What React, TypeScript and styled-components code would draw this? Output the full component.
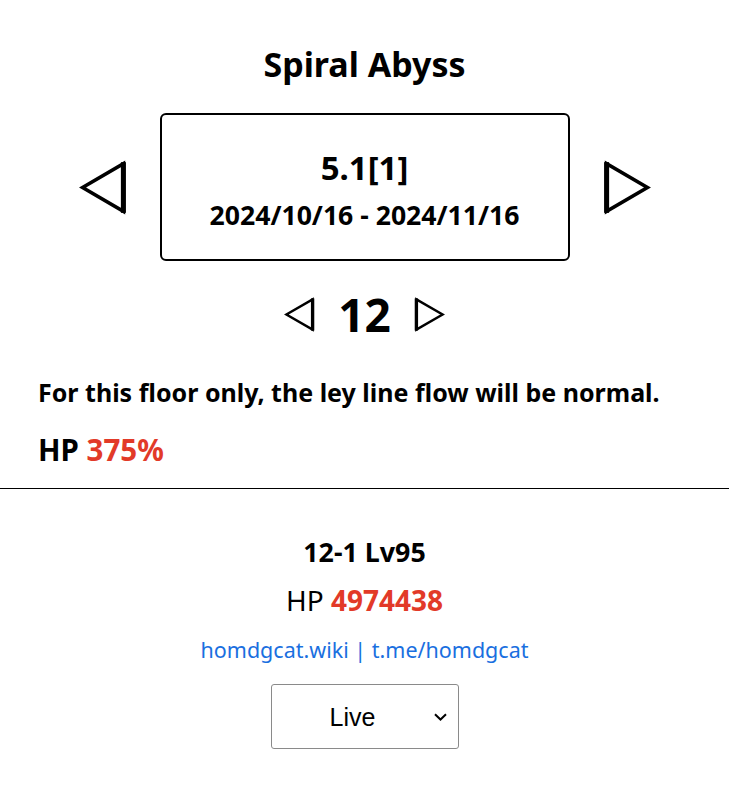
import React from "react"
import styled, { createGlobalStyle } from "styled-components"

const GlobalStyle = createGlobalStyle`
  body {
    margin: 0;
    background: #fff;
    color: #000;
    font-family: "Noto Sans", "Open Sans", sans-serif;
  }
`

// outline triangle, the flat edge drawn a bit heavier like the glyph in the design
const Arrow = ({ dir, size, stroke }: { dir: "left" | "right"; size: number; stroke: number }) => {
  const h = size
  const w = Math.round(size * 0.88)
  const s = stroke
  const flatX = dir === "left" ? w - s : s
  const tipX = dir === "left" ? s : w - s
  return (
    <svg width={w} height={h} viewBox={`0 0 ${w} ${h}`}>
      <polygon
        points={`${flatX},${s} ${flatX},${h - s} ${tipX},${h / 2}`}
        fill="none"
        stroke="#000"
        strokeWidth={s}
        strokeLinejoin="miter"
      />
      <line x1={flatX} y1={s * 0.6} x2={flatX} y2={h - s * 0.6} stroke="#000" strokeWidth={s * 1.4} />
    </svg>
  )
}

const Chevron = () => (
  <svg width="13" height="8" viewBox="0 0 13 8">
    <path d="M1 1.2 L6.5 6.5 L12 1.2" fill="none" stroke="#000" strokeWidth="2" />
  </svg>
)

const App = () => {
  return (
    <>
      <GlobalStyle />
      <Page>
        <Top>
          <Title>Spiral Abyss</Title>
          <VersionRow>
            <NavButton>
              <Arrow dir="left" size={55} stroke={3.6} />
            </NavButton>
            <VersionBox>
              <Version>5.1[1]</Version>
              <Dates>2024/10/16 - 2024/11/16</Dates>
            </VersionBox>
            <NavButton>
              <Arrow dir="right" size={55} stroke={3.6} />
            </NavButton>
          </VersionRow>
          <FloorRow>
            <NavButton>
              <Arrow dir="left" size={35} stroke={2.4} />
            </NavButton>
            <Floor>12</Floor>
            <NavButton>
              <Arrow dir="right" size={35} stroke={2.4} />
            </NavButton>
          </FloorRow>
          <Note>For this floor only, the ley line flow will be normal.</Note>
          <FloorHp>
            HP <Red>375%</Red>
          </FloorHp>
        </Top>
        <Divider />
        <Bottom>
          <Chamber>12-1 Lv95</Chamber>
          <ChamberHp>
            HP <Red>4974438</Red>
          </ChamberHp>
          <Links>
            <a href="#">homdgcat.wiki</a> | <a href="#">t.me/homdgcat</a>
          </Links>
          <SelectWrap>
            <Select defaultValue="Live">
              <option value="Live">Live</option>
              <option value="Beta">Beta</option>
            </Select>
            <SelectIcon>
              <Chevron />
            </SelectIcon>
          </SelectWrap>
        </Bottom>
      </Page>
    </>
  )
}

const Page = styled.div`
  width: 729px;
`

const Top = styled.section`
  display: flex;
  flex-direction: column;
  align-items: center;
  padding-top: 41px;
  padding-bottom: 21px;
`

const Title = styled.h1`
  margin: 0;
  font-size: 34px;
  font-weight: 700;
  line-height: 46px;
`

const VersionRow = styled.div`
  display: flex;
  align-items: center;
  gap: 33px;
  margin-top: 26px;
`

const NavButton = styled.div`
  display: flex;
  align-items: center;
  cursor: pointer;
`

const VersionBox = styled.div`
  box-sizing: border-box;
  width: 410px;
  height: 148px;
  padding-top: 5px;
  border: 2px solid #000;
  border-radius: 6px;
  display: flex;
  flex-direction: column;
  align-items: center;
  justify-content: center;
  gap: 11px;
`

const Version = styled.div`
  font-size: 33px;
  font-weight: 700;
  line-height: 40px;
`

const Dates = styled.div`
  font-size: 26.6px;
  font-weight: 700;
  line-height: 32px;
`

const FloorRow = styled.div`
  display: flex;
  align-items: center;
  gap: 23px;
  margin-top: 27px;
`

const Floor = styled.div`
  font-size: 46px;
  font-weight: 700;
  line-height: 52px;
`

const Note = styled.p`
  align-self: stretch;
  margin: 37px 0 0 38px;
  font-size: 25px;
  font-weight: 700;
  line-height: 30px;
`

const FloorHp = styled.p`
  align-self: stretch;
  margin: 26px 0 0 38px;
  font-size: 29.5px;
  font-weight: 700;
  line-height: 34px;
`

const Red = styled.span`
  color: #e23a28;
  font-weight: 700;
`

const Divider = styled.hr`
  margin: 0;
  border: 0;
  border-top: 1px solid #000;
`

const Bottom = styled.section`
  display: flex;
  flex-direction: column;
  align-items: center;
  padding-top: 47px;
`

const Chamber = styled.div`
  font-size: 26.8px;
  font-weight: 700;
  line-height: 32px;
`

const ChamberHp = styled.div`
  margin-top: 15px;
  font-size: 28px;
  line-height: 34px;
`

const Links = styled.div`
  margin-top: 19px;
  font-size: 21.5px;
  line-height: 28px;
  color: #1a6fe0;

  a {
    color: #1a6fe0;
    text-decoration: none;
  }
`

const SelectWrap = styled.div`
  position: relative;
  margin-top: 20px;
`

const Select = styled.select`
  appearance: none;
  width: 188px;
  height: 65px;
  border: 1px solid #8a8a8a;
  border-radius: 3px;
  background: #fff;
  font-family: "Liberation Sans", Arial, sans-serif;
  font-size: 25px;
  text-align: center;
  padding: 0 24px 0 0;
  color: #000;
`

const SelectIcon = styled.span`
  position: absolute;
  right: 12px;
  top: 29px;
  display: flex;
  pointer-events: none;
`

export default App
